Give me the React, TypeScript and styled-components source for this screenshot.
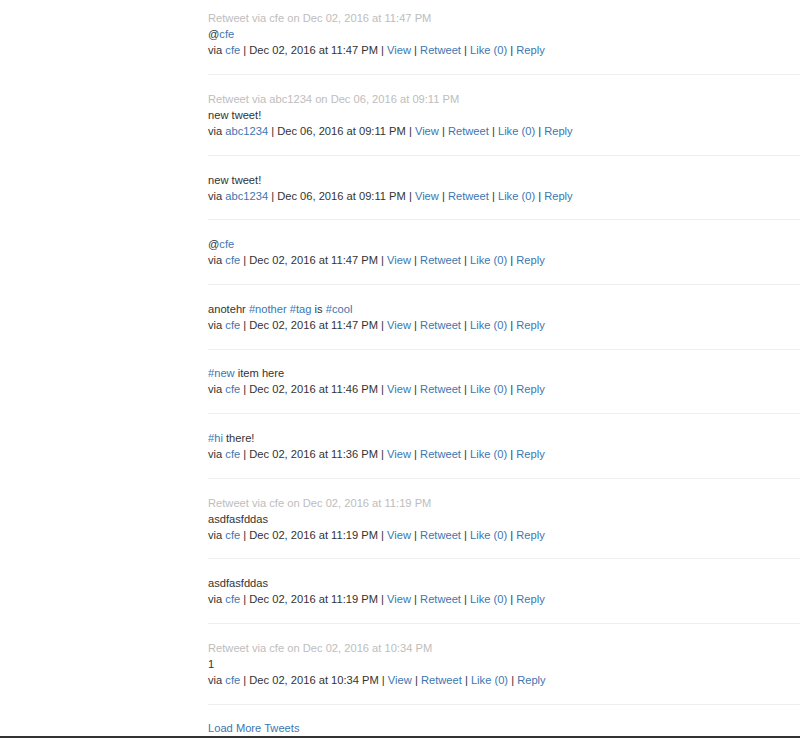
import React from "react";
import styled, { createGlobalStyle } from "styled-components";

const Global = createGlobalStyle`
  html, body { margin: 0; padding: 0; background: #fff; }
  body {
    font-family: "Liberation Sans", Arial, Helvetica, sans-serif;
    font-size: 11.15px;
    line-height: 16px;
    color: #333;
  }
`;

const Page = styled.div`
  padding: 10.4px 0 0 208px;
  overflow: hidden;
`;

const Tweet = styled.div``;

const Muted = styled.div`
  color: #bdbdbd;
`;

const Line = styled.div``;

const A = styled.a`
  color: #3d76b0;
  text-decoration: none;
`;

const Rule = styled.hr`
  margin: 15.8px 0;
  border: 0;
  border-top: 1px solid #eee;
  height: 0;
`;

const BottomEdge = styled.div`
  position: fixed;
  left: 0;
  right: 0;
  bottom: 0;
  height: 2px;
  background: #333;
`;

type Part = string | { tag: string };

type TweetData = {
  rt?: string;
  content: Part[];
  user: string;
  date: string;
};

const tweets: TweetData[] = [
  { rt: "Retweet via cfe on Dec 02, 2016 at 11:47 PM", content: ["@", { tag: "cfe" }], user: "cfe", date: "Dec 02, 2016 at 11:47 PM" },
  { rt: "Retweet via abc1234 on Dec 06, 2016 at 09:11 PM", content: ["new tweet!"], user: "abc1234", date: "Dec 06, 2016 at 09:11 PM" },
  { content: ["new tweet!"], user: "abc1234", date: "Dec 06, 2016 at 09:11 PM" },
  { content: ["@", { tag: "cfe" }], user: "cfe", date: "Dec 02, 2016 at 11:47 PM" },
  { content: ["anotehr ", { tag: "#nother" }, " ", { tag: "#tag" }, " is ", { tag: "#cool" }], user: "cfe", date: "Dec 02, 2016 at 11:47 PM" },
  { content: [{ tag: "#new" }, " item here"], user: "cfe", date: "Dec 02, 2016 at 11:46 PM" },
  { content: [{ tag: "#hi" }, " there!"], user: "cfe", date: "Dec 02, 2016 at 11:36 PM" },
  { rt: "Retweet via cfe on Dec 02, 2016 at 11:19 PM", content: ["asdfasfddas"], user: "cfe", date: "Dec 02, 2016 at 11:19 PM" },
  { content: ["asdfasfddas"], user: "cfe", date: "Dec 02, 2016 at 11:19 PM" },
  { rt: "Retweet via cfe on Dec 02, 2016 at 10:34 PM", content: ["1"], user: "cfe", date: "Dec 02, 2016 at 10:34 PM" },
];

export default function App() {
  return (
    <>
      <Global />
      <Page>
        {tweets.map((t, i) => (
          <React.Fragment key={i}>
            <Tweet>
              {t.rt && <Muted>{t.rt}</Muted>}
              <Line>
                {t.content.map((p, j) =>
                  typeof p === "string" ? (
                    <React.Fragment key={j}>{p}</React.Fragment>
                  ) : (
                    <A key={j} href="#">{p.tag}</A>
                  )
                )}
              </Line>
              <Line>
                via <A href="#">{t.user}</A> | {t.date} | <A href="#">View</A> |{" "}
                <A href="#">Retweet</A> | <A href="#">Like (0)</A> | <A href="#">Reply</A>
              </Line>
            </Tweet>
            <Rule />
          </React.Fragment>
        ))}
        <A href="#">Load More Tweets</A>
      </Page>
      <BottomEdge />
    </>
  );
}
